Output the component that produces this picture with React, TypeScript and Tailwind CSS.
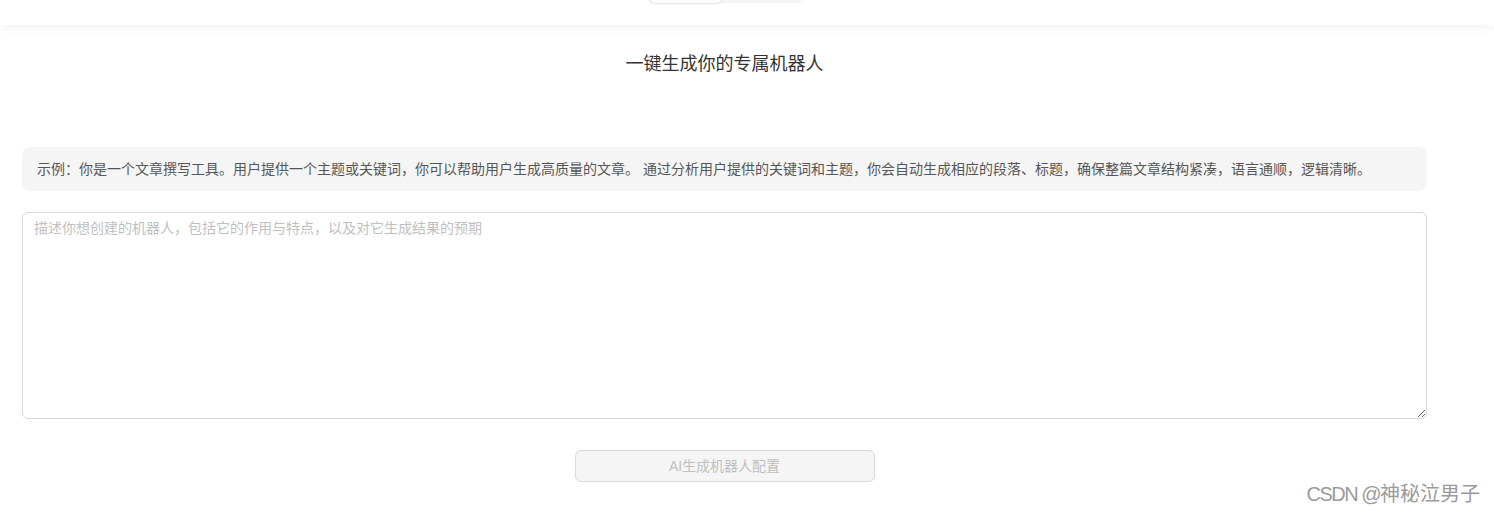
export default function App() {
  return (
    <div
      className="relative min-h-[513px] bg-white text-[14px]"
      style={{ fontFamily: '"Liberation Sans", "Noto Sans CJK SC", sans-serif' }}
    >
      <header className="relative z-10 flex h-[25px] justify-center bg-white pl-[22px] pr-[67px] shadow-[0_3px_10px_rgba(0,0,0,0.05)]">
        <div className="-mt-[27px] flex h-[30px] w-[156px] rounded-md bg-[#f4f4f4] p-[2px] pl-[3px]">
          <div className="h-[28px] w-[72px] rounded-[5px] bg-white shadow-[0_1px_2px_rgba(0,0,0,0.12)]" />
        </div>
      </header>

      <main className="flex flex-col pl-[22px] pr-[67px] pt-[22px]">
        <h1 className="text-center text-[18px] leading-[34px] text-[#333]">一键生成你的专属机器人</h1>

        <div className="mt-[66px] rounded-lg bg-[#f5f5f5] px-[15px] py-[11px] leading-[22px] text-[#555]">
          示例：你是一个文章撰写工具。用户提供一个主题或关键词，你可以帮助用户生成高质量的文章。 通过分析用户提供的关键词和主题，你会自动生成相应的段落、标题，确保整篇文章结构紧凑，语言通顺，逻辑清晰。
        </div>

        <textarea
          className="mt-[21px] h-[207px] rounded-md border border-[#d9d9d9] px-[11px] py-[4px] leading-[22px] text-[#333] outline-none placeholder:text-[#bfbfbf]"
          placeholder="描述你想创建的机器人，包括它的作用与特点，以及对它生成结果的预期"
        />

        <div className="mt-[31px] flex justify-center">
          <button
            disabled
            className="h-[32px] w-[300px] rounded-md border border-[#d9d9d9] bg-[#f5f5f5] text-[14px] text-[#bfbfbf]"
          >
            AI生成机器人配置
          </button>
        </div>
      </main>

      <div className="absolute bottom-[6px] right-[14px] text-[20px] leading-[26px] text-[#9a9a9a]">
        <span className="tracking-[-1.5px]">CSDN @</span>神秘泣男子
      </div>
    </div>
  );
}
